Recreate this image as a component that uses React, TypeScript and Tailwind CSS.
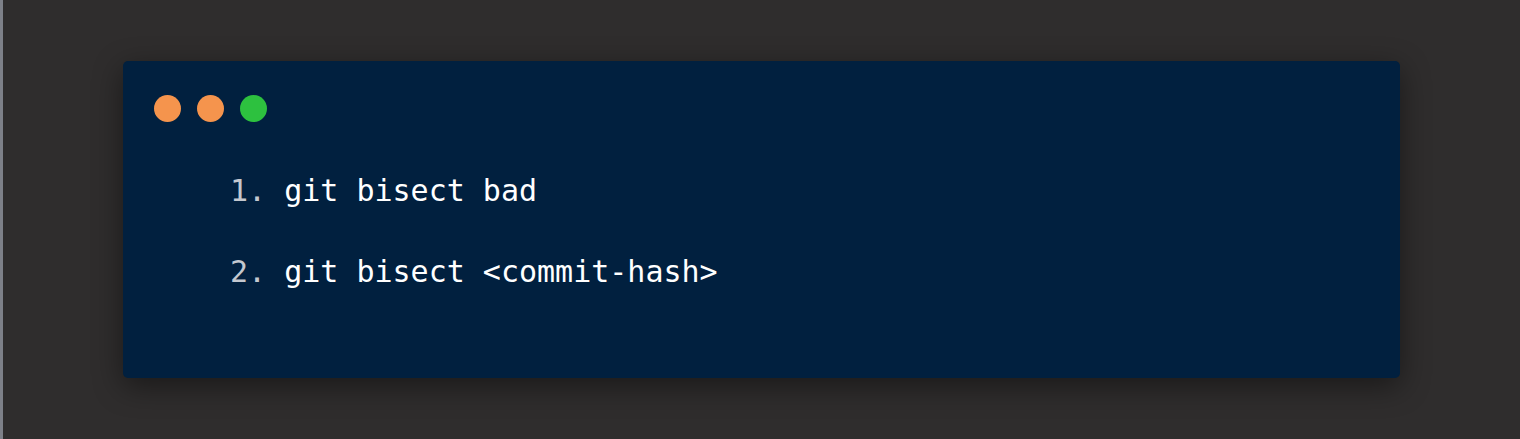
export default function App() {
  const mono = { fontFamily: '"DejaVu Sans Mono", "Liberation Mono", monospace' };
  return (
    <div className="flex h-[439px] w-[1520px] overflow-hidden bg-[#2f2d2d]">
      <div className="h-full w-[3px] bg-[#7d8088]" />
      <div className="flex-1 pl-[120px] pr-[120px] pt-[61px]">
        <div className="h-[317px] rounded-[5px] bg-[#01203f] px-[31px] pt-[112px] shadow-[0_8px_30px_rgba(0,0,0,0.45)] relative">
          <div className="absolute left-[31px] top-[34px] flex gap-[16px]">
            <span className="h-[27px] w-[27px] rounded-full bg-[#f5944d]" />
            <span className="h-[27px] w-[27px] rounded-full bg-[#f5944d]" />
            <span className="h-[27px] w-[27px] rounded-full bg-[#2dc13f]" />
          </div>
          <div className="flex flex-col gap-[45px] pl-[76px] text-[30px] leading-[36px] text-white" style={mono}>
            <div className="whitespace-pre"><span className="text-[#c4c8cf]">1.</span> git bisect bad</div>
            <div className="whitespace-pre"><span className="text-[#c4c8cf]">2.</span> git bisect &lt;commit-hash&gt;</div>
          </div>
        </div>
      </div>
    </div>
  );
}
